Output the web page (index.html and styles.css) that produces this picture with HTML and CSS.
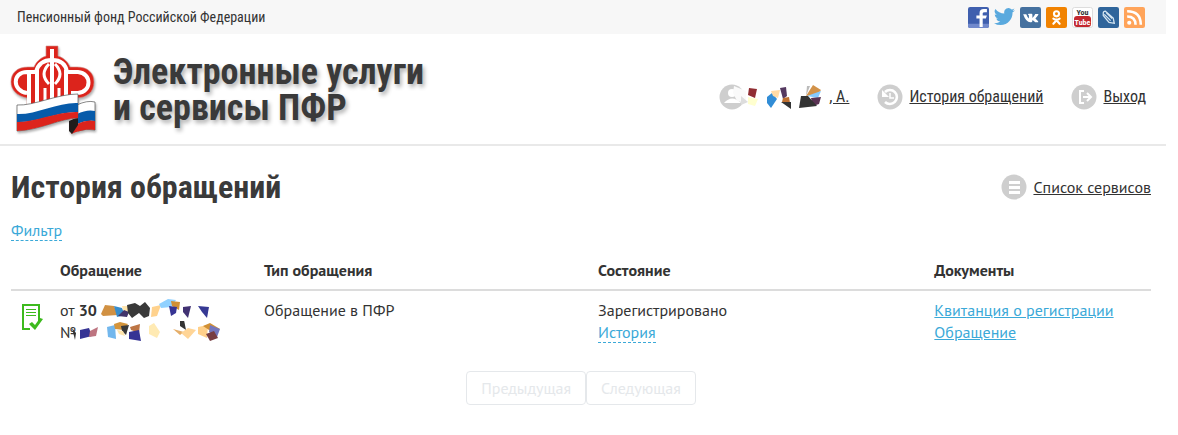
FILE: index.html
```html
<!DOCTYPE html>
<html lang="ru">
<head>
  <meta charset="UTF-8">
  <meta name="viewport" content="width=device-width,initial-scale=1.0">
  <title>История обращений</title>
  <link rel="stylesheet" href="styles.css">
</head>
<body>
<div class="topbar">
  <a class="topbar-title" href="#">Пенсионный фонд Российской Федерации</a>
  <div class="social">
    <a href="#" aria-label="Facebook"><svg width="21" height="21" viewBox="1 1 20 20"><rect x="1" y="1" width="20" height="20" rx="2" fill="#3f5fae"/><path d="M1 17h20v2q0 2-2 2H3q-2 0-2-2z" fill="#7189cc"/><path d="M12 20v-8h-3V9h3V7q0-4 4-4h3v3h-2q-2 0-2 1v2h4l-1 3h-3v8z" fill="#fff"/></svg></a>
    <a href="#" aria-label="Twitter"><svg width="21" height="21" viewBox="0 1 24 24"><path fill="#59a9de" d="M24 4.600a10 10 0 0 1-2.800.8 5 5 0 0 0 2.100-2.700 10 10 0 0 1-3.100 1.200 4.900 4.900 0 0 0-8.400 4.500A14 14 0 0 1 1.600 3.200a4.900 4.900 0 0 0 1.500 6.600 5 5 0 0 1-2.200-.6 5 5 0 0 0 3.900 4.900 5 5 0 0 1-2.200.1 4.900 4.900 0 0 0 4.600 3.400A10 10 0 0 1 0 19.500a14 14 0 0 0 7.500 2.200c9.100 0 14-7.700 13.700-14.600A10 10 0 0 0 24 4.600z"/></svg></a>
    <a href="#" aria-label="ВКонтакте"><svg width="21" height="21" viewBox="1 1 20 20"><rect x="1" y="1" width="20" height="20" rx="2" fill="#45719f"/><path d="M4 8h3q1 3 2.500 4V9L8.500 8q0-.6 1-.6h2.500q.8 0 .8 1v3q1.500-1 2.700-3.700h3q.4.600-2.800 4.300 3.300 3 2.600 3.500H15.500L13 13.300q-.3 2.200-1.200 2.200Q7 16.500 4 8z" fill="#fff"/></svg></a>
    <a href="#" aria-label="Одноклассники"><svg width="21" height="21" viewBox="1 1 20 20"><rect x="1" y="1" width="20" height="20" rx="2" fill="#f18200"/><circle cx="11" cy="7.500" r="2.400" fill="none" stroke="#fff" stroke-width="2"/><path d="M8 12q3 2 6 0M8 17l3-3.300 3 3.300" fill="none" stroke="#fff" stroke-width="2" stroke-linecap="round"/></svg></a>
    <a href="#" aria-label="YouTube"><svg width="21" height="21" viewBox="0 0 21 21"><rect x=".5" y=".5" width="20" height="20" rx="2" fill="#fff" stroke="#ddd"/><rect x="2" y="9" width="17" height="11" rx="3" fill="#c3282e"/><text class="yt-text" x="10.500" y="8" text-anchor="middle">You</text><text class="yt-text yt-tube" x="10.500" y="18" text-anchor="middle">Tube</text></svg></a>
    <a href="#" aria-label="LiveJournal"><svg width="21" height="21" viewBox="1 1 20 20"><rect x="1" y="1" width="20" height="20" rx="2" fill="#2f659b"/><path d="M6 7q0-2 2-2l7.500 6.500 1 5-5-.8L6 9zM7 8l6 6M9 6.500l5.500 5.500" fill="none" stroke="#d5e6f2" stroke-width="1.200"/></svg></a>
    <a href="#" aria-label="RSS"><svg width="21" height="21" viewBox="1 1 20 20"><rect x="1" y="1" width="20" height="20" rx="2" fill="#ffa45a"/><circle cx="6" cy="16" r="2" fill="#fff"/><path d="M4 10q8 0 8 8M4 5q13 0 13 13" fill="none" stroke="#fff" stroke-width="2.500"/></svg></a>
  </div>
</div>

<header class="header">
  <a class="brand" href="#">
    <svg class="logo" width="90" height="92" viewBox="0 0 90 92" aria-hidden="true">
      <!-- эмблема: корона -->
      <path d="M37 2h12v10c6 2 10 6 12 11h7c11 0 17 6 17 15 0 10-7 16-18 16H60v10H18V54C8 52 2 46 2 38c0-9 6-15 17-15h6c2-5 6-9 12-11z" fill="#dc241c" stroke="#d0908c" stroke-width=".6"/>
      <g fill="none" stroke="#fff" stroke-width="4">
        <path d="M18 49C3 47 3 28 18 28h10M20 28v34M28 26v36"/>
        <path d="M27 28q3-12 16-12t15 12" stroke-width="4"/>
        <path d="M43 5v57" stroke-width="4"/>
        <path d="M36 62V44M50 62V44M40 20q-10 10 0 20M46 20q10 10 0 20" stroke-width="3"/>
        <path d="M57 56V26M57 28h12c14 1 14 20 0 21h-7"/>
      </g>
      <!-- лента -->
      <path d="M68 61q10-5 18-3v28q-8-2-17 1z" fill="#fff" stroke="#555" stroke-width=".7"/>
      <path d="M68 70q10-5 18-3v10q-9-1-18 3z" fill="#075baa"/>
      <path d="M86 77v9q-10-2-24 4l6-10q9-5 18-3z" fill="#dc241c"/>
      <path d="M60 77l9-4v8l-6 9-3-3z" fill="#211c1b"/>
      <path d="M8 61c17 1 40-11 61-11v24c-17 0-38 12-61 13z" fill="#fff" stroke="#555" stroke-width=".7"/>
      <path d="M8 70c18 1 42-12 61-11v9C48 68 27 79 8 78z" fill="#075baa"/>
      <path d="M8 78c18 0 42-11 61-10v6c-17 0-38 12-61 13z" fill="#dc241c"/>
    </svg>
    <span class="brand-name">Электронные услуги<br>и сервисы ПФР</span>
  </a>
  <nav class="usernav">
    <a class="user" href="#">
      <svg width="110" height="26" viewBox="0 1 110 26" aria-hidden="true">
        <circle cx="13" cy="14" r="12.500" fill="#cecece"/>
        <circle cx="13" cy="10" r="4" fill="#fff"/><path d="M5 20q8-9 17 0z" fill="#fff"/>
        <path d="M15 3l12 5v12l-9-2-4-8z" fill="#fafafa"/>
        <path d="M22 13l7 6-7 3z" fill="#ddd"/><path d="M30 5l8 1-2 9-7-3z" fill="#902d32"/><path d="M29 14l10 2-3 7-7-2z" fill="#ffffcf"/>
        <path d="M48 14l5-4 5 6-6 9-4-5z" fill="#318dd6"/><path d="M52 8l9-1-2 8-5-2z" fill="#ffdba6"/><path d="M61 5l6-1 1 9-4 3z" fill="#553960"/><path d="M64 15l6-1 1 6-8-1z" fill="#bf7030"/><path d="M62 19h10v7z" fill="#333"/>
        <path d="M87 13l7-11 8 5-4 5z" fill="#d29249"/><path d="M88 3l3 0-4 10z" fill="#bbb"/><path d="M88 13l14-5-3 7z" fill="#85caff"/><path d="M92 15l10-1-2 7-6 2z" fill="#5a3253"/><path d="M82 13h7l9 10-18 2z" fill="#333"/>
      </svg>
      <span>, А.</span>
    </a>
    <a href="#">
      <svg width="26" height="26" viewBox="0 0 26 26" aria-hidden="true"><circle cx="13" cy="13" r="12.500" fill="#cecece"/><path d="M8 8a7 7 0 1 1 0 10" fill="none" stroke="#fff" stroke-width="2.600"/><path d="M5 6v7h7z" fill="#fff"/><path d="M13 9v5h4" fill="none" stroke="#fff" stroke-width="1.500"/></svg>
      <span>История обращений</span>
    </a>
    <a href="#">
      <svg width="26" height="26" viewBox="0 0 26 26" aria-hidden="true"><circle cx="13" cy="13" r="12.500" fill="#cecece"/><path d="M13 7H9v12h4M12 13h8M16 9l4 4-4 4" fill="none" stroke="#fff" stroke-width="2"/></svg>
      <span>Выход</span>
    </a>
  </nav>
</header>

<main class="content">
  <div class="heading">
    <h1>История обращений</h1>
    <a class="services" href="#">
      <svg width="26" height="26" viewBox="0 0 26 26" aria-hidden="true"><circle cx="13" cy="13" r="12.500" fill="#cecece"/><path d="M8 8.500h11M8 13.500h11M8 18.500h11" stroke="#fff" stroke-width="3"/></svg>
      <span>Список сервисов</span>
    </a>
  </div>
  <a class="dashed" href="#">Фильтр</a>

  <table class="requests">
    <thead>
      <tr><th class="col-icon"></th><th class="col-request">Обращение</th><th class="col-type">Тип обращения</th><th class="col-state">Состояние</th><th>Документы</th></tr>
    </thead>
    <tbody>
      <tr>
        <td class="status"><svg width="22" height="28" viewBox="0 0 22 28" role="img" aria-label="Зарегистрировано"><path d="M9 26H2V2h16v16" fill="none" stroke="#3dba1e" stroke-width="2"/><path d="M5 6.500h10M5 9.500h10M5 12.500h10" stroke="#3dba1e"/><path d="M8 21l3-2 3 3 5-7 3 1-8 11z" fill="#3dba1e"/></svg></td>
        <td>
          <div class="line">от <b>30</b>
            <svg width="112" height="22" viewBox="0 0 112 22" aria-hidden="true">
              <path d="M0 15l4-9 9 1 4 9-15 1z" fill="#d19143"/><path d="M13 7l8 2 3 7-8 2z" fill="#378dcc"/><path d="M21 7h8v8l-7-4z" fill="#ffe5ad"/><path d="M17 17l6-6 5 2-2 5z" fill="#41346b"/><path d="M26 6l8-2 5 3 5-4 5 6-1 8-5 2-5-5-7 5-4-5z" fill="#393939"/><path d="M51 8l9-2-4 11-6 1z" fill="#ffd28d"/><path d="M58 5l9-5 8 1-5 7-10 1z" fill="#90d1ff"/><path d="M70 2l9 1-1 8-7-4z" fill="#d19034"/><path d="M68 7l8 1-1 6-5 3z" fill="#363494"/><path d="M82 8l8-1-3 12-5-6z" fill="#413273"/><path d="M97 7l11 1-2 11-5-6z" fill="#363994"/>
            </svg>
          </div>
          <div class="line">№<svg class="number" width="152" height="22" viewBox="0 0 152 22" aria-hidden="true">
              <path d="M0 7l4 5-1 7z" fill="#333"/><path d="M8 9l9-2 3 8-12 3z" fill="#363494"/><path d="M18 10l8-4-2 9-7 1z" fill="#bd7480"/><path d="M35 6l8-2 1 14-8-2z" fill="#72b7ed"/><path d="M42 3l6-2 8 2-4 6-9-1z" fill="#d4943b"/><path d="M49 5l8-1-3 10-4-4z" fill="#393939"/><path d="M45 9l6 1 2 5-6-2z" fill="#ffe5ad"/><path d="M58 6l10-3-1 9-8-3z" fill="#bd7544"/><path d="M57 11l10-2 2 11-12-2z" fill="#363494"/><path d="M77 5l5-3 6 9-3 6-8-4z" fill="#ffeab3"/><path d="M108 0l4-1 2 10-6-4z" fill="#333"/><path d="M101 8l11 3-4 3z" fill="#e5ae69"/><path d="M109 12l7-5 8 2-8 9z" fill="#ffd597"/><path d="M126 6l10-2-1 13-9-4z" fill="#ffd08a"/><path d="M131 5l7-3 10 6-8 3z" fill="#d19034"/><path d="M138 4l10 4-3 8-8-5z" fill="#7376bd"/><path d="M134 13l8-3 4 7-8 3z" fill="#773d42"/>
            </svg>
          </div>
        </td>
        <td>Обращение в ПФР</td>
        <td>Зарегистрировано<br><a class="dashed" href="#">История</a></td>
        <td><a class="doc" href="#">Квитанция о регистрации</a><br><a class="doc" href="#">Обращение</a></td>
      </tr>
    </tbody>
  </table>

  <div class="pager">
    <button type="button" disabled>Предыдущая</button>
    <button type="button" disabled>Следующая</button>
  </div>
</main>
</body>
</html>
```
FILE: styles.css
```css
body{
  margin:0 12px 0 0;
  background:#fff;
  color:#333;
  font:16px/22px "PT Sans","Noto Sans",sans-serif;
}
.topbar,.usernav,.brand-name,h1{
  font-family:"Roboto Condensed","Liberation Sans Narrow",Roboto,sans-serif;
}
.topbar{
  display:flex;
  align-items:center;
  justify-content:space-between;
  height:34px;
  padding:0 21px 0 17px;
  background:#f7f7f7;
}
.topbar-title{
  color:#333;
  font-size:14px;
  text-decoration:none;
}
.social{
  display:flex;
  gap:5px;
}
.social svg,.logo,.usernav svg,.services svg,.status svg{
  display:block;
}
.yt-text{
  font:bold 8px "Roboto Condensed","Liberation Sans Narrow",sans-serif;
  fill:#333;
}
.yt-tube{
  fill:#fff;
}
.header{
  display:flex;
  align-items:center;
  justify-content:space-between;
  height:108px;
  padding:2px 20px 0 9px;
  border-bottom:2px solid #e9e9e9;
}
.brand{
  display:flex;
  align-items:center;
  gap:14px;
  color:#3a3a3a;
  text-decoration:none;
}
.logo{
  filter:drop-shadow(1px 2px 1px rgba(0,0,0,.3));
}
.brand-name{
  font-size:36px;
  font-weight:bold;
  line-height:36px;
  text-shadow:2px 3px 4px rgba(0,0,0,.3);
}
.usernav{
  display:flex;
  gap:28px;
  padding-top:14px;
  font-size:16px;
}
.usernav a,.services{
  display:flex;
  align-items:center;
  gap:6px;
  color:#333;
}
.usernav .user{
  gap:0;
}
.content{
  padding:20px 15px 20px 11px;
}
.heading{
  display:flex;
  align-items:center;
  justify-content:space-between;
  margin-bottom:11px;
}
h1{
  margin:0;
  color:#3a3a3a;
  font-size:32px;
  line-height:42px;
}
.dashed{
  color:#3ba9d8;
  text-decoration:none;
  border-bottom:1px dashed #3ba9d8;
}
.requests{
  width:100%;
  margin-top:14px;
  border-collapse:collapse;
  table-layout:fixed;
}
.requests th{
  padding:4px 0 8px;
  border-bottom:2px solid #dcdcdc;
  text-align:left;
}
.requests td{
  padding:8px 0 0;
  vertical-align:top;
}
.col-icon{
  width:49px;
}
.col-request{
  width:17.9%;
}
.col-type{
  width:29.3%;
}
.col-state{
  width:29.5%;
}
.requests .status{
  padding:12px 0 0 10px;
}
.line{
  display:flex;
  gap:4px;
  height:22px;
  white-space:nowrap;
}
.line + .line{
  gap:0;
}
.number{
  margin-left:-4px;
}
.doc{
  color:#3ba9d8;
}
.pager{
  display:flex;
  justify-content:center;
  margin-top:28px;
}
.pager button{
  height:34px;
  padding:0 14px;
  border:1px solid #e5e8eb;
  border-radius:4px;
  background:#fff;
  color:#e5e8eb;
  font:inherit;
}
```
